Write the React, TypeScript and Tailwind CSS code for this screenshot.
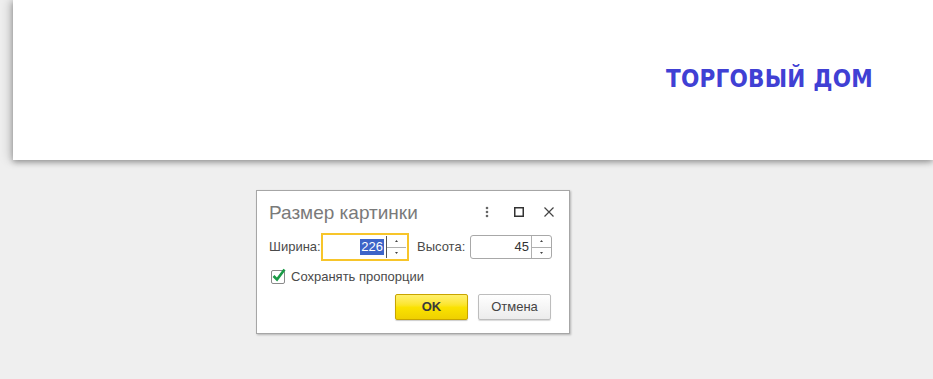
import React from "react";

const font = { fontFamily: '"Liberation Sans", Arial, sans-serif' };

function Arrows({ line }: { line: string }) {
  return (
    <div className={`flex h-full w-[20px] flex-col border-l ${line}`}>
      <div className="flex flex-1 items-center justify-center border-b border-[#b0b0b0]">
        <svg width="3" height="2" viewBox="0 0 3 2">
          <path d="M0 2 L1.5 0 L3 2 Z" fill="#444" />
        </svg>
      </div>
      <div className="flex flex-1 items-center justify-center">
        <svg width="3" height="2" viewBox="0 0 3 2">
          <path d="M0 0 L1.5 2 L3 0 Z" fill="#444" />
        </svg>
      </div>
    </div>
  );
}

export default function App() {
  return (
    <div className="h-[379px] w-[933px] overflow-hidden bg-[#efefef]" style={font}>
      <div className="ml-[13px] flex h-[160px] w-[920px] items-center justify-end bg-white pb-[2px] pr-[60px] shadow-[0_2px_6px_rgba(0,0,0,0.35),-4px_0_10px_rgba(0,0,0,0.15)]">
        <span
          className="text-[24px] font-bold tracking-[0.2px] text-[#4040d4]"
          style={{ fontFamily: '"Comic Sans MS", "DejaVu Sans Condensed", "DejaVu Sans", sans-serif', fontStretch: "condensed" }}
        >
          ТОРГОВЫЙ ДОМ
        </span>
      </div>

      <div className="ml-[256px] mt-[30px] flex h-[144px] w-[314px] flex-col border border-[#a6a6a6] bg-white pl-[12px] pr-[12px] shadow-[1px_1px_2px_rgba(0,0,0,0.25)]">
        <div className="mt-[10px] flex h-[22px] items-center">
          <span className="flex-1 text-[19px] leading-none text-[#7a7a7a]">Размер картинки</span>
          <div className="flex items-center">
            <svg width="4" height="12" viewBox="0 0 4 12" className="mr-[25px]">
              <circle cx="2" cy="2" r="1.3" fill="#666" />
              <circle cx="2" cy="6" r="1.3" fill="#666" />
              <circle cx="2" cy="10" r="1.3" fill="#666" />
            </svg>
            <svg width="10" height="10" viewBox="0 0 10 10" className="mr-[20px]">
              <rect x="0.75" y="0.75" width="8.5" height="8.5" fill="none" stroke="#333" strokeWidth="1.5" />
            </svg>
            <svg width="10" height="10" viewBox="0 0 10 10" className="mr-[3px]">
              <path d="M0.5 0.5 L9.5 9.5 M9.5 0.5 L0.5 9.5" stroke="#444" strokeWidth="1.2" />
            </svg>
          </div>
        </div>

        <div className="mt-[10px] flex h-[28px] items-center text-[13px] text-[#4a4a4a]">
          <span className="w-[52px]">Ширина:</span>
          <div className="flex h-[28px] w-[88px] items-stretch border-2 border-[#f7c52a] bg-white">
            <div className="flex flex-1 items-center justify-end">
              <span className="bg-[#3d64c8] px-[1px] leading-[16px] text-white">226</span>
              <div className="w-[2px]" />
            </div>
            <div className="py-[1px]">
              <Arrows line="border-[#555]" />
            </div>
            <div className="w-[1px]" />
          </div>
          <span className="ml-[8px] w-[53px]">Высота:</span>
          <div className="flex h-[24px] w-[82px] items-stretch overflow-hidden rounded-[3px] border border-[#a8a8a8] bg-white">
            <div className="flex flex-1 items-center justify-end pr-[2px]">
              <span className="text-[#333]">45</span>
            </div>
            <Arrows line="border-[#b0b0b0]" />
          </div>
        </div>

        <div className="mt-[8px] flex h-[16px] items-center text-[13px] text-[#4a4a4a]">
          <div className="relative ml-[2px] mr-[6px] h-[14px] w-[14px] rounded-[2px] border border-[#8a8a8a] bg-white">
            <svg width="16" height="16" viewBox="0 0 16 16" className="absolute left-[-1px] top-[-4px]">
              <path d="M2.5 9 L6 12.5 L13.5 2.5" fill="none" stroke="#1a9a46" strokeWidth="2.6" />
            </svg>
          </div>
          <span>Сохранять пропорции</span>
        </div>

        <div className="mt-[9px] flex justify-end pr-[6px]">
          <button className="flex h-[26px] w-[73px] items-center justify-center rounded-[2px] border border-[#c8a400] bg-gradient-to-b from-[#fff06a] via-[#fbe300] to-[#efd000] text-[13px] font-bold text-[#3a3a3a] shadow-[0_1px_1px_rgba(0,0,0,0.2)]">
            OK
          </button>
          <button className="ml-[10px] flex h-[26px] w-[73px] items-center justify-center rounded-[2px] border border-[#bdbdbd] bg-gradient-to-b from-white to-[#ececec] text-[13px] text-[#444] shadow-[0_1px_1px_rgba(0,0,0,0.15)]">
            Отмена
          </button>
        </div>
      </div>
    </div>
  );
}
